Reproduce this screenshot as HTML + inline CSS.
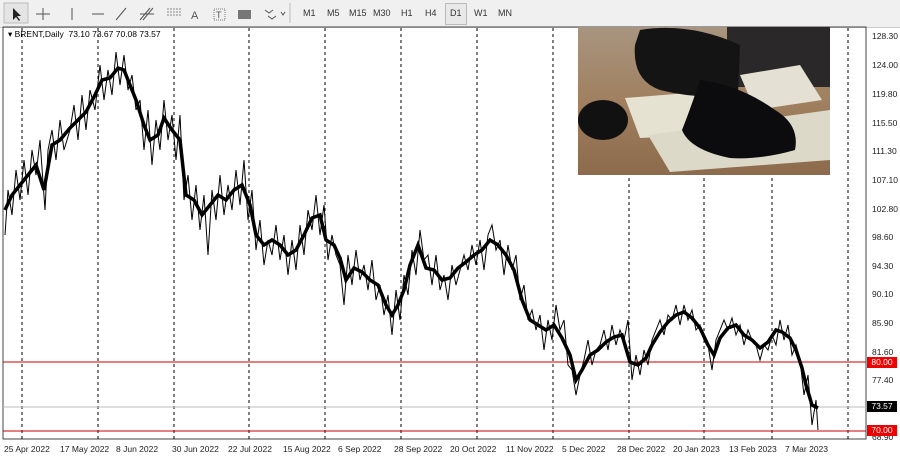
<!DOCTYPE html><html><head><style>
body{margin:0;width:900px;height:458px;background:#fff;font-family:"Liberation Sans",sans-serif;overflow:hidden;position:relative}
.tb{position:absolute;left:0;top:0;width:900px;height:27px;background:#f0f0f0;border-bottom:1px solid #ccc}
.tb span{position:absolute;top:8px;font-size:9px;color:#333}
.ax{position:absolute;left:872px;font-size:8.5px;color:#222}
.dt{position:absolute;top:444px;font-size:8.5px;color:#222;white-space:nowrap}
.bx{position:absolute;left:867px;width:30px;height:11px;font-size:8.5px;color:#fff;text-align:center;line-height:11px}
</style></head><body>
<div class="tb">
<svg width="300" height="27" style="position:absolute;left:0;top:0">
<rect x="4" y="3" width="24" height="20" fill="#e4e4e4" stroke="#bbb"/>
<path d="M13 8 L13 20 L16 17 L19 21 L20 20 L17 16 L21 16 Z" fill="#222"/>
<path d="M43 8v12M36 14h14" stroke="#555"/>
<path d="M72 8v12M92 14h12M116 20l10-12" stroke="#555"/>
<path d="M140 20l10-12M143 20l10-12M140 14h14" stroke="#555"/>
<path d="M167 9h14M167 12h14M167 15h14" stroke="#888" stroke-dasharray="2 1"/>
<text x="191" y="19" font-size="11" fill="#555" font-family="Liberation Sans">A</text>
<rect x="214" y="9" width="11" height="11" fill="none" stroke="#777" stroke-dasharray="1 1"/><text x="216" y="18" font-size="9" fill="#555">T</text>
<rect x="238" y="10" width="13" height="9" fill="#777"/>
<path d="M265 10l4 3l4 -3M268 16l4 3 4-3M281 12l2 3 2-3" stroke="#555" fill="none"/>
<path d="M290 3v20" stroke="#bbb"/>
</svg>
<span style="left:303px">M1</span><span style="left:327px">M5</span><span style="left:349px">M15</span><span style="left:373px">M30</span><span style="left:401px">H1</span><span style="left:425px">H4</span>
<div style="position:absolute;left:445px;top:3px;width:20px;height:20px;border:1px solid #bbb;background:#e8e8e8"></div>
<span style="left:450px">D1</span><span style="left:474px">W1</span><span style="left:498px">MN</span>
</div>
<svg width="900" height="458" style="position:absolute;left:0;top:0">
<rect x="3" y="27" width="863" height="412" fill="none" stroke="#444"/>
<g stroke="#000" stroke-dasharray="3 3">
<path d="M22 28V439M98 28V439M174 28V439M249 28V439M325 28V439M401 28V439M477 28V439M553 28V439M629 28V439M704 28V439M772 28V439M848 28V439"/>
</g>
<path d="M3 362H866M3 431H866" stroke="#c00"/>
<path d="M3 407H866" stroke="#bbb"/>
<polyline fill="none" stroke="#000" stroke-width="1" points="5,235 8,190 12,215 16,170 20,200 24,160 28,195 32,150 36,175 40,140 45,210 48,150 52,130 56,160 60,120 64,150 70,130 74,105 78,140 82,95 86,130 90,90 95,110 100,65 104,100 108,70 112,95 116,52 120,85 124,55 128,90 132,75 136,110 140,100 144,150 148,110 152,165 156,120 160,150 164,100 168,140 172,115 176,160 180,115 184,200 188,175 192,220 196,185 200,230 204,195 208,255 212,190 216,220 220,175 224,215 228,185 232,210 236,170 240,205 244,160 248,220 252,190 256,250 260,220 264,265 268,240 272,255 276,225 280,260 284,235 288,275 292,240 296,270 300,225 304,255 308,210 312,230 316,195 320,235 324,205 328,260 332,235 336,255 340,265 344,305 348,255 352,285 356,250 360,280 364,265 368,290 372,260 376,300 380,285 384,315 388,295 392,335 396,290 400,320 404,275 408,295 412,250 416,275 420,230 424,260 428,255 432,285 436,255 440,290 444,275 448,300 452,265 456,285 460,270 464,255 468,270 472,245 476,265 480,240 484,270 488,235 492,225 496,250 500,240 504,275 508,245 512,270 516,255 520,300 524,285 528,320 532,310 536,330 540,315 544,350 548,320 552,340 556,305 560,330 564,320 568,365 572,370 576,395 580,375 584,360 588,340 592,365 596,350 600,345 604,330 608,350 612,325 616,345 620,330 624,340 628,320 632,380 636,355 640,375 644,350 648,365 652,340 656,330 660,320 664,335 668,315 672,320 676,305 680,325 684,305 688,320 692,310 696,330 700,325 704,340 708,345 712,370 716,340 720,330 724,320 728,330 732,318 736,335 740,325 744,345 748,330 752,340 756,345 760,360 764,345 768,350 772,335 776,345 780,320 784,340 788,325 792,355 796,345 800,360 804,395 808,375 812,425 816,400 818,430"/>
<polyline fill="none" stroke="#000" stroke-width="3.5" points="5,210 12,195 20,185 28,175 36,165 44,190 52,145 60,140 70,128 78,120 86,112 95,95 102,80 110,78 118,68 124,70 130,85 136,100 144,125 150,140 158,135 164,118 172,130 180,140 186,195 194,200 202,215 210,205 218,195 226,200 234,190 242,185 250,205 256,235 264,245 272,240 280,245 288,255 296,250 304,235 312,218 320,215 326,240 334,245 340,258 346,280 354,268 362,272 370,280 378,285 386,305 392,315 398,305 404,290 410,265 418,245 426,268 434,270 442,280 450,278 458,268 466,262 474,255 482,250 490,240 498,245 506,255 514,270 522,300 530,320 538,325 546,330 554,325 562,338 570,355 576,380 582,370 590,355 598,350 606,342 614,337 622,335 630,362 638,365 646,358 652,345 660,332 668,322 676,315 684,312 692,318 700,328 708,345 714,355 720,338 728,328 736,325 744,335 752,340 760,348 768,342 776,330 782,332 790,338 796,350 802,368 806,385 812,405 818,408"/>
<defs><linearGradient id="w" x1="0" y1="0" x2="0" y2="1"><stop offset="0" stop-color="#a89580"/><stop offset="0.5" stop-color="#a0805f"/><stop offset="1" stop-color="#8c6b4d"/></linearGradient></defs>
<rect x="578" y="27" width="252" height="148" fill="url(#w)"/>
<rect x="727" y="27" width="103" height="60" fill="#2a2828"/>
<polygon points="625,98 700,92 700,135 640,138" fill="#e6e2d2"/>
<polygon points="740,75 800,65 822,100 755,110" fill="#e4e1d4"/>
<polygon points="648,135 830,110 830,160 670,172" fill="#dcd9c8"/>
<ellipse cx="603" cy="120" rx="25" ry="20" fill="#111"/>
<path d="M640 30 Q690 22 740 45 L738 95 Q700 100 660 90 Q632 80 635 45Z" fill="#141414"/>
<path d="M700 80 Q740 85 775 110 Q800 125 795 150 Q760 160 730 158 Q690 150 682 130 Q690 110 700 80Z" fill="#0c0c0f"/>
</svg>
<div style="position:absolute;left:8px;top:29px;font-size:8.5px;color:#000">▾ BRENT,Daily&nbsp; 73.10 73.67 70.08 73.57</div>
<div class="ax" style="top:31px">128.30</div><div class="ax" style="top:60px">124.00</div><div class="ax" style="top:89px">119.80</div><div class="ax" style="top:118px">115.50</div><div class="ax" style="top:146px">111.30</div><div class="ax" style="top:175px">107.10</div><div class="ax" style="top:204px">102.80</div><div class="ax" style="top:232px">98.60</div><div class="ax" style="top:261px">94.30</div><div class="ax" style="top:289px">90.10</div><div class="ax" style="top:318px">85.90</div><div class="ax" style="top:347px">81.60</div><div class="ax" style="top:375px">77.40</div><div class="ax" style="top:432px">68.90</div>
<div class="bx" style="top:357px;background:#e00">80.00</div>
<div class="bx" style="top:401px;background:#000">73.57</div>
<div class="bx" style="top:425px;background:#e00">70.00</div>
<div class="dt" style="left:4px">25 Apr 2022</div><div class="dt" style="left:60px">17 May 2022</div><div class="dt" style="left:116px">8 Jun 2022</div><div class="dt" style="left:172px">30 Jun 2022</div><div class="dt" style="left:228px">22 Jul 2022</div><div class="dt" style="left:283px">15 Aug 2022</div><div class="dt" style="left:338px">6 Sep 2022</div><div class="dt" style="left:394px">28 Sep 2022</div><div class="dt" style="left:450px">20 Oct 2022</div><div class="dt" style="left:506px">11 Nov 2022</div><div class="dt" style="left:562px">5 Dec 2022</div><div class="dt" style="left:617px">28 Dec 2022</div><div class="dt" style="left:673px">20 Jan 2023</div><div class="dt" style="left:729px">13 Feb 2023</div><div class="dt" style="left:785px">7 Mar 2023</div>
</body></html>
